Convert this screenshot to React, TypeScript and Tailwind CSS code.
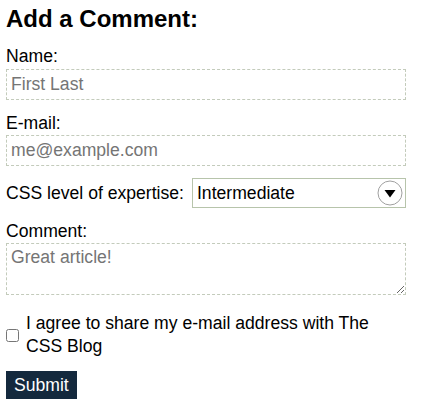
import React from "react";

export default function App() {
  const field =
    "block w-full border border-dashed border-[#c3cbbb] bg-white px-[4px] text-[17.6px] leading-[20px] text-black placeholder:text-[#757575] outline-none font-['Liberation_Sans',Arial,sans-serif]";
  return (
    <div className="px-[6px] pt-[5px] font-['Liberation_Sans',Arial,sans-serif] text-[17.6px] leading-[20px] text-black bg-white min-h-[411px]">
      <h2 className="text-[24px] font-bold leading-[28px]">Add a Comment:</h2>
      <form className="w-[400px]" onSubmit={(e) => e.preventDefault()}>
        <label htmlFor="name" className="block mt-[13px] leading-[20px]">
          Name:
        </label>
        <input id="name" type="text" placeholder="First Last" className={`${field} mt-[3px] h-[31px]`} />

        <label htmlFor="email" className="block mt-[13px] leading-[20px]">
          E-mail:
        </label>
        <input id="email" type="email" placeholder="me@example.com" className={`${field} mt-[2px] h-[31px]`} />

        <div className="mt-[12px] flex items-center">
          <label htmlFor="level" className="leading-[20px] whitespace-nowrap">
            CSS level of expertise:
          </label>
          <div className="relative ml-[8px] flex-1">
            <select
              id="level"
              defaultValue="Intermediate"
              className="block h-[30px] w-full appearance-none border border-[#b7c4ab] bg-white pl-[4px] pr-[30px] text-[17.6px] leading-[20px] text-black outline-none font-['Liberation_Sans',Arial,sans-serif]"
            >
              <option>Beginner</option>
              <option>Intermediate</option>
              <option>Advanced</option>
            </select>
            <svg
              className="pointer-events-none absolute right-[3px] top-[2px]"
              width="26"
              height="26"
              viewBox="0 0 26 26"
            >
              <circle cx="13" cy="13" r="12" fill="white" stroke="#a0a0a0" strokeWidth="1" />
              <path d="M7.5 10 L18.5 10 L13 17.5 Z" fill="#000" />
            </svg>
          </div>
        </div>

        <label htmlFor="comment" className="block mt-[13px] leading-[20px]">
          Comment:
        </label>
        <textarea
          id="comment"
          placeholder="Great article!"
          className={`${field} mt-[2px] h-[52px] py-[3px] resize`}
        />

        <div className="mt-[17px] flex items-center">
          <input id="agree" type="checkbox" className="m-0 h-[13px] w-[13px] shrink-0" />
          <label htmlFor="agree" className="ml-[7px] leading-[23px]">
            I agree to share my e-mail address with The CSS Blog
          </label>
        </div>

        <button
          type="submit"
          className="mt-[13px] block h-[28px] bg-[#14293d] px-[8px] text-[17.6px] leading-[20px] text-white font-['Liberation_Sans',Arial,sans-serif]"
        >
          Submit
        </button>
      </form>
    </div>
  );
}
